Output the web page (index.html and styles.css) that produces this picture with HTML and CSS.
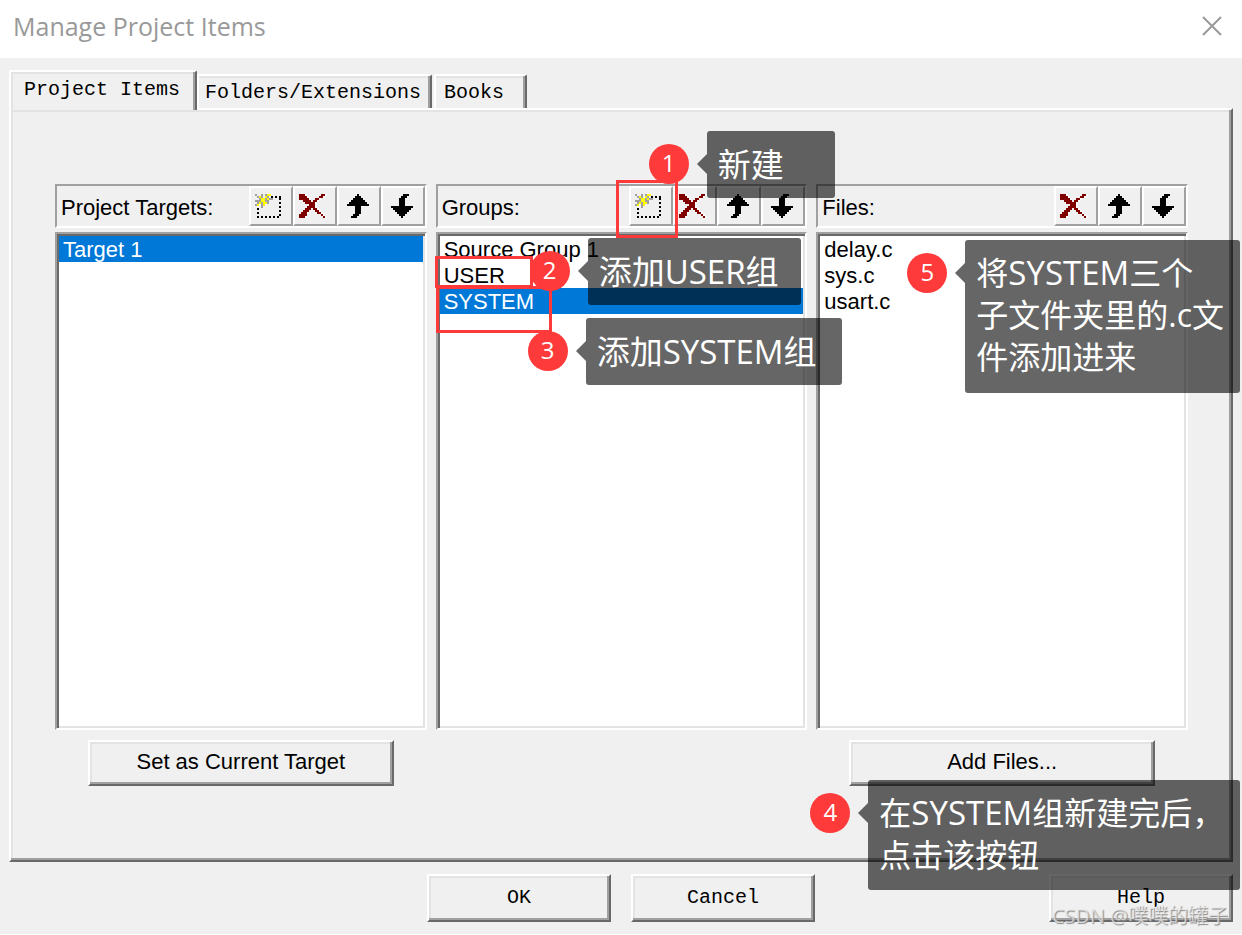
FILE: index.html
```html
<!DOCTYPE html>
<html lang="en">
<head>
<meta charset="utf-8">
<title>Manage Project Items</title>
<link rel="stylesheet" href="styles.css">
</head>
<body>
<svg class="defs" aria-hidden="true">
  <symbol id="i-new" viewBox="0 0 16 16">
    <path stroke="#000" stroke-dasharray="1 1" fill="none" d="M9 2.5h5M2 12.5h12M2.5 6v7M13.5 3v10"/>
    <path stroke="#a0a0a0" fill="none" d="M1 1.5h1M4 1.5h1M6 1.5h1M2 2.5h1M4 2.5h1M7 2.5h1M3 3.5h1M6 3.5h1M8 3.5h2M1 4.5h3M6 4.5h2M2 5.5h1M4 5.5h1M1 6.5h1M4 6.5h1M7 5.5h1M4 7.5h1"/>
    <path stroke="#ff0" fill="none" d="M7 1.5h2M6 2.5h1M3 2.5h1M4 3.5h2M7 3.5h1M4 4.5h2M3 5.5h1M5 5.5h2M2 6.5h1M5 6.5h1"/>
  </symbol>
  <symbol id="i-del" viewBox="0 0 16 16">
    <path stroke="#fff" fill="none" d="M4 1.5h1M14 1.5h1M5 2.5h1M13 2.5h1M6 3.5h1M11 3.5h1M10 4.5h1M9 5.5h1M8 6.5h2M9 7.5h1M9 8.5h2M6 8.5h1M11 9.5h1M5 9.5h1M5 10.5h1M12 10.5h1M4 11.5h1M13 11.5h1M4 12.5h1M14 12.5h1"/>
    <path stroke="#800000" fill="none" d="M1 1.5h3M12 1.5h2M1 2.5h4M11 2.5h2M1 3.5h5M9 3.5h2M3 4.5h4M8 4.5h2M4 5.5h5M6 6.5h3M5 7.5h4M4 8.5h3M8 8.5h2M3 9.5h3M9 9.5h2M2 10.5h3M10 10.5h2M1 11.5h4M12 11.5h1M1 12.5h3M13 12.5h1"/>
  </symbol>
  <symbol id="i-up" viewBox="0 0 16 16">
    <path stroke="#000" fill="none" d="M8 1.5h1M7 2.5h3M6 3.5h5M5 4.5h7M4 5.5h9M3 6.5h11M7 7.5h3M7 8.5h3M7 9.5h3M7 10.5h3M6 11.5h3M5 12.5h3"/>
  </symbol>
  <symbol id="i-down" viewBox="0 0 16 16">
    <path stroke="#000" fill="none" d="M9 1.5h3M8 2.5h3M7 3.5h3M7 4.5h3M7 5.5h3M7 6.5h3M3 7.5h11M4 8.5h9M5 9.5h7M6 10.5h5M7 11.5h3M8 12.5h1"/>
  </symbol>
</svg>
<main class="dialog">
  <header class="titlebar">
    <h1>Manage Project Items</h1>
    <button class="close" aria-label="Close"><svg viewBox="0 0 20 20"><path d="M1 1l18 18M19 1L1 19"/></svg></button>
  </header>
  <nav class="tabs" role="tablist">
    <button class="tab active" role="tab" aria-selected="true">Project Items</button>
    <button class="tab" role="tab">Folders/Extensions</button>
    <button class="tab last" role="tab">Books</button>
  </nav>
  <section class="panel" role="tabpanel">
    <div class="column">
      <div class="bar">
        <h2 id="targets">Project Targets:</h2>
        <button class="tool" aria-label="New"><svg><use href="#i-new"/></svg></button>
        <button class="tool" aria-label="Delete"><svg><use href="#i-del"/></svg></button>
        <button class="tool" aria-label="Move up"><svg><use href="#i-up"/></svg></button>
        <button class="tool" aria-label="Move down"><svg><use href="#i-down"/></svg></button>
      </div>
      <ul class="list" role="listbox" aria-labelledby="targets">
        <li class="selected" role="option" aria-selected="true">Target 1</li>
      </ul>
      <button class="push wide">Set as Current Target</button>
    </div>
    <div class="column">
      <div class="bar">
        <h2 id="groups">Groups:</h2>
        <button class="tool" aria-label="New"><svg><use href="#i-new"/></svg></button>
        <button class="tool" aria-label="Delete"><svg><use href="#i-del"/></svg></button>
        <button class="tool" aria-label="Move up"><svg><use href="#i-up"/></svg></button>
        <button class="tool" aria-label="Move down"><svg><use href="#i-down"/></svg></button>
      </div>
      <ul class="list" role="listbox" aria-labelledby="groups">
        <li role="option">Source Group 1</li>
        <li role="option">USER</li>
        <li class="selected" role="option" aria-selected="true">SYSTEM</li>
      </ul>
      <div class="mark mark-new"></div>
      <div class="mark mark-user"></div>
      <div class="mark mark-system"></div>
      <div class="badge badge-1">1</div>
      <div class="note note-1">新建</div>
      <div class="badge badge-2">2</div>
      <div class="note note-2">添加USER组</div>
      <div class="badge badge-3">3</div>
      <div class="note note-3">添加SYSTEM组</div>
    </div>
    <div class="column">
      <div class="bar">
        <h2 id="files">Files:</h2>
        <button class="tool" aria-label="Delete"><svg><use href="#i-del"/></svg></button>
        <button class="tool" aria-label="Move up"><svg><use href="#i-up"/></svg></button>
        <button class="tool" aria-label="Move down"><svg><use href="#i-down"/></svg></button>
      </div>
      <ul class="list" role="listbox" aria-labelledby="files">
        <li role="option">delay.c</li>
        <li role="option">sys.c</li>
        <li role="option">usart.c</li>
      </ul>
      <button class="push wide">Add Files...</button>
      <div class="badge badge-4">4</div>
      <div class="note note-4">在<span class="latin">SYSTEM</span>组新建完后，<br>点击该按钮</div>
      <div class="badge badge-5">5</div>
      <div class="note note-5">将<span class="latin">SYSTEM</span>三个<br>子文件夹里的.c文<br>件添加进来</div>
    </div>
  </section>
  <footer class="actions">
    <button class="push mono">OK</button>
    <button class="push mono">Cancel</button>
    <button class="push mono help">Help</button>
  </footer>
  <p class="watermark">CSDN @噗噗的罐子</p>
</main>
</body>
</html>
```
FILE: styles.css
```css
* { box-sizing: border-box; }
body { margin: 0; background: #fff; color: #000; font-family: "Liberation Sans", Arial, sans-serif; font-size: 22px; }
button { font: inherit; color: inherit; background: #f0f0f0; padding: 0; margin: 0; border-radius: 0; }
h1, h2, p, ul { margin: 0; padding: 0; font-weight: normal; }
.defs { display: none; }
.dialog { position: relative; background: #f0f0f0; padding-bottom: 12px; overflow: hidden; }

.titlebar { display: flex; align-items: center; justify-content: space-between; height: 58px; padding: 0 20px 6px 13px; background: #fff; }
.titlebar h1 { font-family: "Open Sans", "Noto Sans", sans-serif; font-size: 25px; color: #999; }
.close { display: flex; border: 0; background: none; }
.close svg { width: 20px; height: 20px; fill: none; stroke: #999; stroke-width: 2; }

.tabs { display: flex; align-items: flex-end; padding: 12px 9px 0; }
.tab { height: 34px; padding: 2px 9px 0 6px; border: 2px solid; border-color: #fff #696969 #fff #fff; border-bottom: 0; box-shadow: inset -2px 0 #a0a0a0, inset 0 2px #e3e3e3; font-family: "Liberation Mono", monospace; font-size: 20px; line-height: 30px; border-radius: 2px 2px 0 0; }
.tab.active { position: relative; z-index: 1; height: 40px; margin-bottom: -2px; padding: 0 15px 2px 13px; box-shadow: inset -2px 0 #a0a0a0, inset 2px 2px #e3e3e3; }
.tab.last { margin-left: 2px; padding: 2px 21px 0 8px; }

.panel { display: grid; grid-template-columns: repeat(3, minmax(0, 1fr)); gap: 9px; margin: 0 9px; padding: 74px 43px 74px 44px; border: 2px solid; border-color: #fff #696969 #696969 #fff; box-shadow: inset -2px -2px #a0a0a0, inset 2px 2px #e3e3e3; }
.column { position: relative; display: flex; flex-direction: column; align-items: center; }
.bar { display: flex; align-self: stretch; height: 44px; border: 2px solid; border-color: #a0a0a0 #fff #fff #a0a0a0; }
.bar h2 { flex: 1; padding-left: 4px; font-size: 22px; line-height: 44px; }
.tool { display: flex; width: 44px; height: 40px; padding: 4px 2px 0; border: 2px solid; border-color: #fff #a0a0a0 #a0a0a0 #fff; }
.tool svg { flex: none; width: 32px; height: 32px; shape-rendering: crispEdges; }
.list { align-self: stretch; height: 498px; margin: 4px 0 10px; padding: 2px; list-style: none; background: #fff; border: 2px solid; border-color: #a0a0a0 #fff #fff #a0a0a0; box-shadow: inset 2px 2px #696969, inset -2px -2px #e3e3e3; }
.list li { height: 26px; padding-left: 4px; line-height: 27px; }
.list .selected { background: #0078d7; color: #fff; }
.push { width: 184px; height: 48px; padding-bottom: 2px; border: 2px solid; border-color: #fff #696969 #696969 #fff; box-shadow: inset -2px -2px #a0a0a0, inset 2px 2px #e3e3e3; }
.push.wide { width: 306px; height: 46px; }
.push.mono { font-family: "Liberation Mono", monospace; font-size: 20px; }
.actions { display: flex; gap: 20px; padding: 12px 9px 0 427px; }
.help { margin-left: auto; }

.mark, .badge, .note { position: absolute; z-index: 2; }
.mark { border: 3px solid #fe3a3a; }
.mark-new { right: 129px; top: -4px; width: 62px; height: 58px; }
.mark-user { left: -1px; top: 72px; width: 98px; height: 32px; }
.mark-system { left: 0; top: 102px; width: 116px; height: 47px; }
.badge { width: 40px; height: 40px; border-radius: 50%; background: #fe3a3a; color: #fff; font: 24px/38px "Open Sans", "Noto Sans", sans-serif; text-align: center; }
.note { padding: 12px 11px; border-radius: 3px; background: rgba(0, 0, 0, 0.6); color: #fff; font: 33px/43px "Open Sans", "Noto Sans CJK SC", sans-serif; white-space: nowrap; }
.note::before { content: ""; position: absolute; left: -10px; top: 23px; border: 10px solid transparent; border-left: 0; border-right-color: rgba(0, 0, 0, 0.6); }
.note-4, .note-5 { height: 110px; padding-bottom: 0; font-size: 32px; line-height: 42px; }
.note-5 { height: 153px; }
.latin { font-size: 33px; line-height: 1; }
.badge-1 { left: 213px; top: -40px; }
.note-1 { left: 271px; top: -53px; width: 128px; }
.badge-2 { left: 94px; top: 67px; }
.note-2 { left: 152px; top: 54px; width: 213px; }
.badge-3 { left: 92px; top: 147px; }
.note-3 { left: 150px; top: 134px; width: 256px; }
.badge-4 { left: -6px; top: 609px; }
.note-4 { left: 52px; top: 596px; width: 372px; }
.badge-5 { left: 91px; top: 69px; }
.note-5 { left: 149px; top: 56px; width: 275px; }
.watermark { position: absolute; z-index: 3; right: 14px; bottom: 4px; font: 20px/28px "Open Sans", "Noto Sans CJK SC", sans-serif; color: rgba(240, 240, 240, 0.7); text-shadow: 1px 1px 1px #888; }
```
